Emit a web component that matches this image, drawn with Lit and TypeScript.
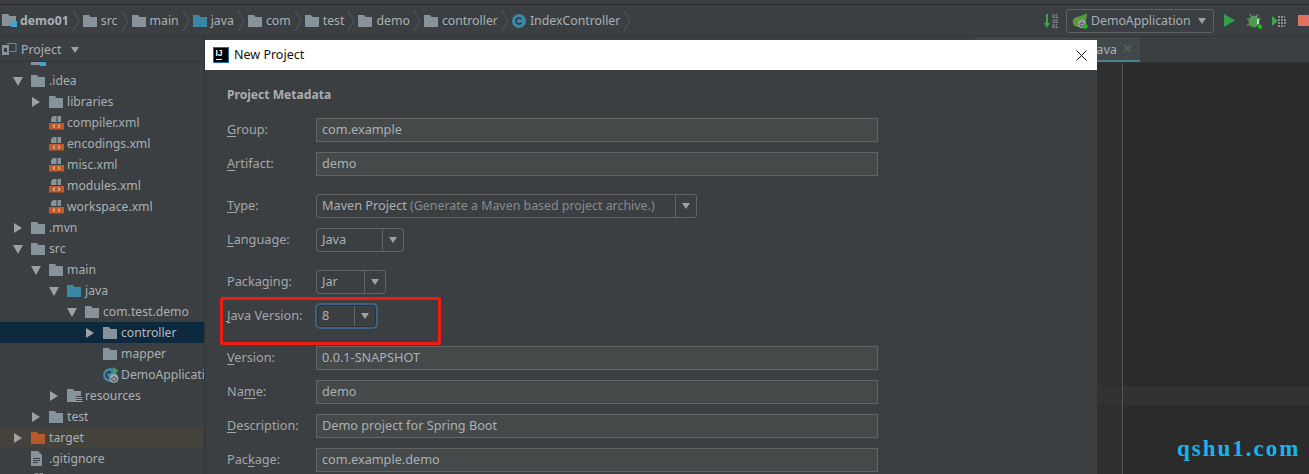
import { LitElement, html, css, nothing } from "lit";
import { customElement } from "lit/decorators.js";

const folder = (c = "#87939a", dot = false) => html`<svg class="ic" width="14" height="14" viewBox="0 0 14 14"><path fill=${c} d="M0 1h6l1.500 2H14v10H0z"/>${dot ? html`<circle cx="7" cy="7.500" r="1.600" fill="#3c3f41"/>` : nothing}</svg>`;
const xml = () => html`<svg class="ic" width="15" height="15" viewBox="0 0 15 15"><path fill="#87939a" d="M4 1h3.500v6H2V3.200zM8.500 1H12v6H8.500z"/><rect x="0" y="8" width="15" height="6.500" fill="#c05a2a"/><path fill="none" stroke="#f0d8c8" stroke-width="1" d="M6 9.500 4 11.200l2 1.800M9 9.500l2 1.700L9 13"/></svg>`;
const cls = () => html`<svg class="ic" width="14" height="14" viewBox="0 0 14 14"><circle cx="7" cy="7" r="7" fill="#3d87a6"/><path fill="none" stroke="#25333a" stroke-width="1.500" d="M9.300 5.200A3 3 0 1 0 9.300 8.800"/></svg>`;
const module = () => html`<svg class="ic" width="15" height="15" viewBox="0 0 15 15"><path fill="#87939a" d="M0 1h6l1.500 2H14v10H0z"/><rect x="9" y="8" width="6" height="6" fill="#3aa6d8"/></svg>`;
const resources = () => html`<svg class="ic" width="16" height="15" viewBox="0 0 16 15"><path fill="#87939a" d="M0 1h6l1.500 2H14v5H9v6H0z"/><path stroke="#d6a03c" stroke-width="1" d="M9 9.500h6.500M9 11.500h6.500M9 13.500h6.500"/></svg>`;
const runClass = () => html`<svg class="ic" width="16" height="16" viewBox="0 0 16 16"><circle cx="7" cy="8" r="7" fill="#3d87a6"/><path fill="none" stroke="#25333a" stroke-width="1.500" d="M8 5.500a3 3 0 1 0 0 5"/><path fill="#3fa34d" d="M10 0l5.500 3.500L10 7z"/><circle cx="11" cy="11.500" r="4.500" fill="#9aa7b0"/><path fill="none" stroke="#3c3f41" d="M9.300 10.500a2.300 2.300 0 1 0 3.400 0M11 9v2.500"/></svg>`;
const textFile = () => html`<svg class="ic" width="11" height="15" viewBox="0 0 11 15"><path fill="#87939a" d="M0 0h7l4 4v11H0z"/><path stroke="#3c3f41" stroke-width="1" d="M2 7.500h7M2 9.500h7M2 11.500h5"/></svg>`;
const chev = () => html`<svg class="chev" width="8" height="22" viewBox="0 0 8 22"><path fill="none" stroke="#55595b" d="M1 1l6 10-6 10"/></svg>`;
const caret = () => html`<svg class="caret" width="8" height="6" viewBox="0 0 8 6"><path fill="#9da1a3" d="M0 0h8L4 6z"/></svg>`;

const tri = (open: boolean) => html`<svg width="10" height="10" viewBox="0 0 10 10"><path fill="#9da1a3" d=${open ? "M0 1h10L5 10z" : "M1 0l8 5-8 5z"}/></svg>`;

type Row = { level: number; text: string; icon: unknown; arrow?: "open" | "closed"; mod?: string };
const rows: Row[] = [
  { level: 0, text: "", icon: module() },
  { level: 0, text: ".idea", icon: folder(), arrow: "open" },
  { level: 1, text: "libraries", icon: folder(), arrow: "closed" },
  { level: 1, text: "compiler.xml", icon: xml() },
  { level: 1, text: "encodings.xml", icon: xml() },
  { level: 1, text: "misc.xml", icon: xml() },
  { level: 1, text: "modules.xml", icon: xml() },
  { level: 1, text: "workspace.xml", icon: xml() },
  { level: 0, text: ".mvn", icon: folder(), arrow: "closed" },
  { level: 0, text: "src", icon: folder(), arrow: "open" },
  { level: 1, text: "main", icon: folder(), arrow: "open" },
  { level: 2, text: "java", icon: folder("#3d87a6"), arrow: "open" },
  { level: 3, text: "com.test.demo", icon: folder("#87939a", true), arrow: "open" },
  { level: 4, text: "controller", icon: folder("#87939a", true), arrow: "closed", mod: "sel" },
  { level: 4, text: "mapper", icon: folder("#87939a", true) },
  { level: 4, text: "DemoApplication", icon: runClass() },
  { level: 2, text: "resources", icon: resources(), arrow: "closed" },
  { level: 1, text: "test", icon: folder(), arrow: "closed" },
  { level: 0, text: "target", icon: folder("#b5592a"), arrow: "closed", mod: "excluded" },
  { level: 0, text: ".gitignore", icon: textFile() },
  { level: 0, text: "", icon: xml() },
];

const crumbs = [
  { t: "src", i: folder() },
  { t: "main", i: folder() },
  { t: "java", i: folder("#3d87a6") },
  { t: "com", i: folder("#87939a", true) },
  { t: "test", i: folder("#87939a", true) },
  { t: "demo", i: folder("#87939a", true) },
  { t: "controller", i: folder("#87939a", true) },
  { t: "IndexController", i: cls() },
];

type F = { label: unknown; value?: unknown; combo?: string; gap?: boolean; focus?: boolean };
const fields: F[] = [
  { label: html`<u>G</u>roup:`, value: "com.example" },
  { label: html`<u>A</u>rtifact:`, value: "demo" },
  { label: html`<u>T</u>ype:`, combo: "type", gap: true, value: html`Maven Project <span class="hint">(Generate a Maven based project archive.)</span>` },
  { label: html`<u>L</u>anguage:`, combo: "lang", value: "Java" },
  { label: html`Packa<u>g</u>ing:`, combo: "pack", gap: true, value: "Jar" },
  { label: html`<u>J</u>ava Version:`, combo: "jv", focus: true, value: "8" },
  { label: html`<u>V</u>ersion:`, gap: true, value: "0.0.1-SNAPSHOT" },
  { label: html`Na<u>m</u>e:`, value: "demo" },
  { label: html`<u>D</u>escription:`, value: "Demo project for Spring Boot" },
  { label: html`Pac<u>k</u>age:`, value: "com.example.demo" },
];

@customElement("app-root")
export class AppRoot extends LitElement {
  static styles = css`
    :host { display: block; width: 1309px; height: 474px; position: relative; overflow: hidden; background: #3c3f41; font-family: "Noto Sans", sans-serif; font-size: 12.300px; color: #a9b0b5; }
    .ic { flex: none; display: block; }
    .top { height: 5px; box-sizing: border-box; background: #3c3f41; border-bottom: 1px solid #2b2b2b; }
    .nav { height: 32px; box-sizing: border-box; display: flex; align-items: center; padding: 0 0 0 2px; border-bottom: 1px solid #323436; }
    .crumb { display: flex; align-items: center; gap: 4px; white-space: nowrap; }
    .crumb.root { font-weight: 700; gap: 3px; }
    .chev { flex: none; margin: 0 3px; }
    .tools { margin-left: auto; display: flex; align-items: center; }
    .bin { display: block; margin-right: 6px; }
    .run { width: 148px; height: 24px; box-sizing: border-box; border: 1px solid #5e6163; border-radius: 3px; display: flex; align-items: center; gap: 3px; padding-left: 5px; margin-right: 10px; white-space: nowrap; }
    .run .caret { margin-left: auto; margin-right: 7px; }
    .tool { display: block; margin-right: 11px; }
    .tool.bug { margin-right: 9px; }
    .stop { width: 11px; height: 11px; background: #e2705f; flex: none; }
    .main { display: flex; height: 437px; }
    .side { width: 204px; flex: none; border-right: 1px solid #2f3133; display: flex; flex-direction: column; overflow: hidden; font-size: 12.200px; }
    .phead { height: 25px; box-sizing: border-box; flex: none; display: flex; align-items: center; padding: 1px 0 0 2px; gap: 4px; border-bottom: 1px solid #323436; font-size: 12.400px; }
    .phead .caret { margin-left: 6px; }
    .tree { flex: 1; overflow: hidden; margin: 0; }
    .rows { margin-top: -13px; }
    .row { height: 21px; display: flex; align-items: center; white-space: nowrap; }
    .row span { padding-bottom: 1px; }
    .row.sel { background: #0d293e; color: #b5bbbf; }
    .row.excluded { background: #45423c; }
    .arrow { width: 18px; flex: none; display: flex; }
    .iconbox { width: 18px; flex: none; display: flex; }
    .editor { flex: 1; display: flex; flex-direction: column; min-width: 0; }
    .tabs { height: 26px; box-sizing: border-box; flex: none; display: flex; border-bottom: 1px solid #323436; }
    .spacer { width: 770px; flex: none; }
    .tab { width: 165px; flex: none; display: flex; align-items: center; justify-content: flex-end; gap: 6px; padding-right: 8px; box-sizing: border-box; background: #43484b; border-bottom: 2px solid #4a7f90; white-space: nowrap; font-size: 12.700px; }
    .tab svg { display: block; }
    .body { flex: 1; display: flex; }
    .gutter { width: 917px; flex: none; background: #2f2f2f; border-right: 1px solid #555; }
    .code { flex: 1; background: #2b2b2b; }
    .caretline { margin-top: 323px; height: 19px; background: #323232; }
    .dialog { position: absolute; left: 205px; top: 40px; width: 892px; height: 434px; background: #3c3f41; font-size: 12.700px; }
    .title { height: 30px; background: #fff; color: #111; display: flex; align-items: center; padding-left: 8px; gap: 5px; font-size: 12.500px; }
    .title span { padding-bottom: 2px; }
    .title .x { margin-left: auto; margin-right: 10px; display: block; }
    .form { padding: 14px 0 0 22px; }
    .h { font-weight: 700; height: 21px; line-height: 21px; font-size: 12.100px; margin-bottom: 13px; color: #a9adb0; }
    .f { display: flex; height: 24px; align-items: center; margin-bottom: 10px; }
    .f.gap { margin-top: 18px; }
    .lab { width: 89px; flex: none; color: #a2a7aa; white-space: nowrap; padding-bottom: 2px; }
    .lab u { text-underline-offset: 2px; }
    .inp { width: 562px; height: 24px; box-sizing: border-box; background: #45494a; border: 1px solid #646464; padding: 0 0 2px 5px; display: flex; align-items: center; color: #a9b0b5; white-space: nowrap; }
    .combo { background: #3c3f41; border-radius: 3px; padding: 0 0 0 5px; }
    .combo .val { flex: 1; padding-bottom: 2px; }
    .combo .btn { width: 20px; flex: none; height: 100%; border-left: 1px solid #646464; display: flex; align-items: center; justify-content: center; }
    .type { width: 381px; } .lang { width: 88px; } .pack { width: 70px; }
    .jv { width: 59px; height: 22px; margin-left: 1px; padding-left: 4px; }
    .focus { border: 1px solid #2d2f30; outline: 2px solid #3d6185; }
    .hint { color: #858b8e; font-size: 12.400px; }
    .red { position: absolute; left: 220px; top: 297px; width: 221px; height: 48px; box-sizing: border-box; border: 3px solid #f01c14; border-radius: 2px; }
    .mark { position: absolute; left: 1177px; top: 434px; font-family: "Liberation Serif", serif; font-weight: 700; font-size: 23px; line-height: 30px; letter-spacing: 2px; color: #18b4ee; white-space: nowrap; }
  `;

  render() {
    return html`
      <div class="top"></div>
      <div class="nav">
        <div class="crumb root">${module()}<span>demo01</span></div>${chev()}
        ${crumbs.map((c) => html`<div class="crumb">${c.i}<span>${c.t}</span></div>${chev()}`)}
        <div class="tools">
          <svg class="bin" width="16" height="16" viewBox="0 0 16 16"><path fill="#3fa34d" d="M2 1h2v9h2l-3 5-3-5h2z"/><text x="8" y="5" font-size="5" fill="#a9b0b5" font-family="Liberation Mono">01</text><text x="8" y="10" font-size="5" fill="#a9b0b5" font-family="Liberation Mono">10</text><text x="8" y="15" font-size="5" fill="#a9b0b5" font-family="Liberation Mono">01</text></svg>
          <div class="run">
            <svg class="ic" width="16" height="16" viewBox="0 0 16 16"><path fill="#5c9a3c" d="M15 0C15 6 13 13 7 14 2 14 0 11 1 7 3 3 9 4 15 0z"/><circle cx="10" cy="11" r="4" fill="#9aa7b0"/><path fill="none" stroke="#3c3f41" d="M8.500 10a2 2 0 1 0 3 0M10 8.500V11"/><circle cx="13.500" cy="13.500" r="2.300" fill="#12c712"/></svg>
            <span>DemoApplication</span>${caret()}
          </div>
          <svg class="tool" width="12" height="13" viewBox="0 0 12 13"><path fill="#2ea24a" d="M0 0l11 6.500L0 13z"/></svg>
          <svg class="tool bug" width="16" height="16" viewBox="0 0 16 16"><ellipse cx="7" cy="8.500" rx="5.500" ry="6" fill="#4d9a55"/><path stroke="#8ca38f" d="M3 1l2 3M11 1L9 4M0 6h2M0 12h2M12 6h2M12 12h2"/><path fill="#c9d4ca" d="M10 6h2v5h-2z"/><circle cx="13" cy="14" r="2" fill="#12c712"/></svg>
          <svg class="tool" width="15" height="14" viewBox="0 0 15 14"><path fill="#3fa34d" d="M0 2l6 5-6 5z"/><path stroke="#8a8d8f" stroke-width="2" stroke-dasharray="2 1" d="M6 3h7M6 6h9M6 9h9M6 12h7"/></svg>
          <div class="stop"></div>
        </div>
      </div>
      <div class="main">
        <div class="side">
          <div class="phead">
            <svg class="ic" width="15" height="13" viewBox="0 0 15 13"><rect x="0" y="2" width="7" height="10" fill="#87939a"/><rect x="2" y="5" width="3" height="4" fill="#3c3f41"/><path fill="none" stroke="#5c8fae" d="M5 .5h9v8H8"/></svg>
            <span>Project</span>${caret()}
          </div>
          <div class="tree"><div class="rows">
            ${rows.map((r) => html`
              <div class="row ${r.mod ?? ""}" style="padding-left:${13 + r.level * 18}px">
                <div class="arrow">${r.arrow ? tri(r.arrow === "open") : nothing}</div>
                <div class="iconbox">${r.icon}</div>
                <span>${r.text}</span>
              </div>`)}
          </div></div>
        </div>
        <div class="editor">
          <div class="tabs">
            <div class="spacer"></div>
            <div class="tab"><span>IndexController.java</span><svg width="9" height="9" viewBox="0 0 9 9"><path stroke="#5d6264" stroke-width="1.300" d="M1 1l7 7M8 1L1 8"/></svg></div>
          </div>
          <div class="body">
            <div class="gutter"><div class="caretline"></div></div>
            <div class="code"><div class="caretline"></div></div>
          </div>
        </div>
      </div>

      <div class="dialog">
        <div class="title">
          <svg class="ic" width="16" height="16" viewBox="0 0 16 16"><rect width="16" height="16" fill="#000"/><rect x=".5" y=".5" width="15" height="15" fill="none" stroke="#1c6fb0"/><text x="2.500" y="9" font-size="8.500" font-weight="700" fill="#fff" font-family="Liberation Sans">IJ</text><rect x="3" y="12" width="6" height="1" fill="#fff"/></svg>
          <span>New Project</span>
          <svg class="x" width="11" height="11" viewBox="0 0 11 11"><path stroke="#111" stroke-width="1" d="M.5.500l10 10M10.500.500l-10 10"/></svg>
        </div>
        <div class="form">
          <div class="h">Project Metadata</div>
          ${fields.map((f) => html`
            <div class="f ${f.gap ? "gap" : ""}">
              <div class="lab">${f.label}</div>
              ${f.combo
                ? html`<div class="inp combo ${f.combo} ${f.focus ? "focus" : ""}"><span class="val">${f.value}</span><span class="btn">${caret()}</span></div>`
                : html`<div class="inp">${f.value}</div>`}
            </div>`)}
        </div>
      </div>
      <div class="red"></div>
      <div class="mark">qshu1.com</div>
    `;
  }
}
